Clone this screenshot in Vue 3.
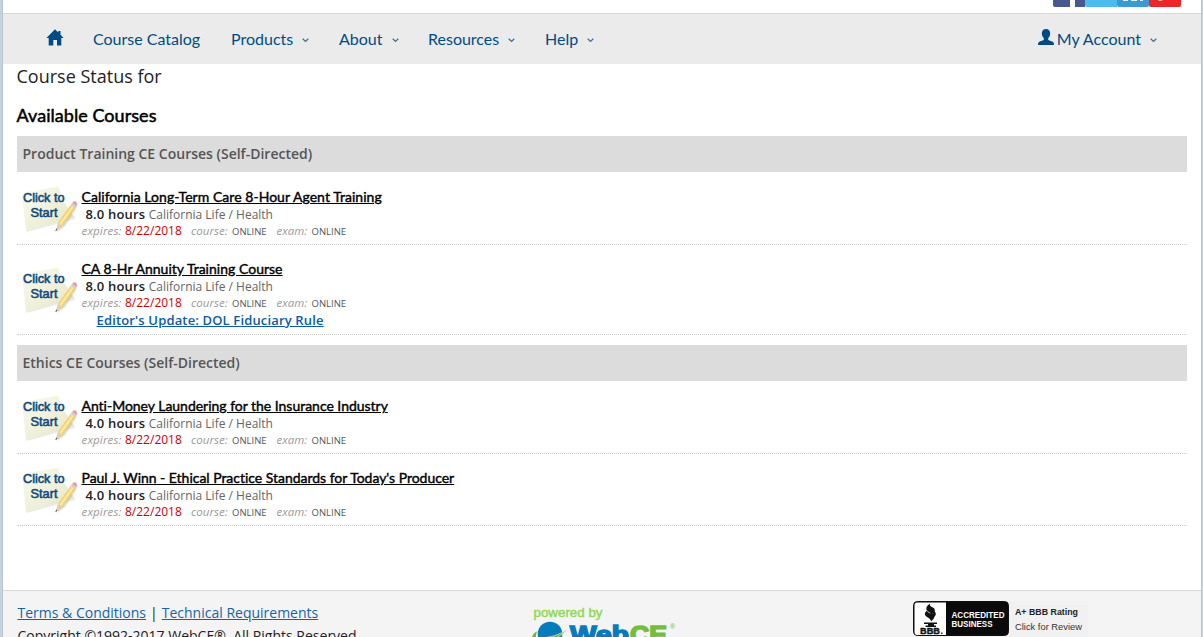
<script setup>
const menu = [
  { label: 'Products', cls: 'products' },
  { label: 'About', cls: 'about' },
  { label: 'Resources', cls: 'resources' },
  { label: 'Help', cls: 'help' },
]
const groups = [
  {
    title: 'Product Training CE Courses (Self-Directed)',
    courses: [
      { name: 'California Long-Term Care 8-Hour Agent Training', cls: 't1', hours: '8.0 hours' },
      { name: 'CA 8-Hr Annuity Training Course', cls: 't2', hours: '8.0 hours', update: "Editor's Update: DOL Fiduciary Rule" },
    ],
  },
  {
    title: 'Ethics CE Courses (Self-Directed)',
    courses: [
      { name: 'Anti-Money Laundering for the Insurance Industry', cls: 't3', hours: '4.0 hours' },
      { name: "Paul J. Winn - Ethical Practice Standards for Today's Producer", cls: 't4', hours: '4.0 hours' },
    ],
  },
]
</script>

<template>
  <div class="page">
    <div class="top">
      <div class="social">
        <svg width="128" height="7" viewBox="0 0 128 7">
          <path d="M0 0H32V7H2Q0 7 0 5Z" fill="#48588f" />
          <path d="M17 0H22V7H17Z" fill="#fff" />
          <path d="M32 0H64V7H34Q32 7 32 5Z" fill="#4dbcec" />
          <path d="M64 0H96V5Q96 7 94 7H66Q64 7 64 5Z" fill="#3a9ad4" />
          <path d="M96 0H128V5Q128 7 126 7H98Q96 7 96 5Z" fill="#ee2526" />
          <path d="M70 0h5v1h-5zM78 0h6v1h-6zM87 0h3v1h-3z" fill="#e2f2fb" />
          <path d="M105 0h5l-2 1h-2z" fill="#fff" opacity=".7" />
        </svg>
      </div>
    </div>
    <nav class="nav">
      <svg class="home" width="18" height="17" viewBox="0 0 18 17">
        <path d="M9 .3L12.300 3.500V2H14.500V5.700L17.600 9H15.300V16.500H11V11H7.300V16.500H2.700V9H.4Z" fill="#004b85" />
      </svg>
      <span class="link catalog"><span>Course Catalog</span></span>
      <span v-for="m in menu" :key="m.label" class="link" :class="m.cls">
        <span>{{ m.label }}</span>
        <svg class="chev" width="7" height="5" viewBox="0 0 7 5"><path d="M.7 .8L3.500 3.500L6.300 .8" fill="none" stroke="#3f6a98" stroke-width="1.200" /></svg>
      </span>
      <span class="link account">
        <svg class="user" width="16" height="16" viewBox="0 0 16 16">
          <path d="M8 0C10.700 0 12.200 1.800 12.200 4.500C12.200 6.500 11.200 8.200 10.200 9.300V10.800C11 11.800 14.500 12 15.500 13.500Q16 14.300 16 16H0Q0 14.300 .5 13.500C1.500 12 5 11.800 5.800 10.800V9.300C4.800 8.200 3.800 6.500 3.800 4.500C3.800 1.800 5.300 0 8 0Z" fill="#004b85" />
        </svg>
        <span>My Account</span>
        <svg class="chev" width="7" height="5" viewBox="0 0 7 5"><path d="M.7 .8L3.500 3.500L6.300 .8" fill="none" stroke="#3f6a98" stroke-width="1.200" /></svg>
      </span>
    </nav>
    <main class="content">
      <div class="status">Course Status for</div>
      <h2 class="available">Available Courses</h2>
      <section v-for="g in groups" :key="g.title" class="group">
        <h3 class="bar"><span>{{ g.title }}</span></h3>
        <article v-for="c in g.courses" :key="c.name" class="course" :class="{ tall: c.update }">
          <svg class="note" width="56" height="48" viewBox="0 0 56 48">
            <defs>
              <linearGradient id="paper" x1="0" y1="0" x2="1" y2="1">
                <stop offset="0" stop-color="#fafaee" />
                <stop offset=".6" stop-color="#eeefd9" />
                <stop offset="1" stop-color="#dde0b9" />
              </linearGradient>
            </defs>
            <path d="M1 8L36 1.500L43 18L53.500 33L4.500 46Z" fill="#999" opacity=".2" />
            <path d="M0 7L36 .5L42 16L52.500 31L4 45Z" fill="url(#paper)" />
            <path d="M35 46L39 36L53 17L55 21L43 40Z" fill="#888" opacity=".3" />
            <path d="M36 37L48.500 19L53.500 22L40.500 40Z" fill="#f1d071" />
            <path d="M37.300 37.500L50 20L51.700 21L39 39Z" fill="#fdec9c" />
            <path d="M48.500 19L50 17L54.800 20L53.500 22Z" fill="#cfcfd6" />
            <path d="M50 17Q51.500 14.500 54 15.500Q55.500 17 54.800 20Z" fill="#ec9a9f" />
            <path d="M36 37L40.500 40L33.500 45Z" fill="#e5cda5" />
            <path d="M34.300 42.500L35.600 43.700L33.300 45.200Z" fill="#555" />
            <g fill="#0b4a7c" stroke="#0b4a7c" stroke-width=".55" font-family="Liberation Sans, sans-serif" font-size="12.500">
              <text x="1" y="16" textLength="41.500" lengthAdjust="spacingAndGlyphs">Click to</text>
              <text x="8.500" y="30.500" textLength="27" lengthAdjust="spacingAndGlyphs">Start</text>
            </g>
          </svg>
          <div class="info">
            <div class="name"><a :class="c.cls">{{ c.name }}</a></div>
            <div class="hours"><b>{{ c.hours }}</b><span>California Life / Health</span></div>
            <div class="meta">
              <i class="exp">expires:</i><span class="date">8/22/2018</span>
              <i class="crs">course:</i><span class="mode">ONLINE</span>
              <i class="exm">exam:</i><span class="mode">ONLINE</span>
            </div>
            <a v-if="c.update" class="update">{{ c.update }}</a>
          </div>
        </article>
      </section>
    </main>
    <footer class="footer">
      <div class="legal">
        <div><a class="terms">Terms &amp; Conditions</a><span class="sep">|</span><a class="tech">Technical Requirements</a></div>
        <div class="copy">Copyright ©1992-2017 WebCE®. All Rights Reserved</div>
      </div>
      <svg class="webce" width="150" height="32" viewBox="0 0 150 32">
        <text x="1.500" y="12" fill="#92d950" stroke="#92d950" stroke-width=".45" font-family="Liberation Sans, sans-serif" font-size="13.500" textLength="69" lengthAdjust="spacingAndGlyphs">powered by</text>
        <circle cx="18" cy="29" r="12.300" fill="#087bbd" />
        <path d="M0 32Q1 28 5.500 26Q3.500 29 4 32Z" fill="#70b83b" />
        <path d="M5 33Q25 33 36 23.500Q30 31 20 35Z" fill="#70b83b" stroke="#f4f4f4" stroke-width=".6" />
        <g font-family="Liberation Sans, sans-serif" font-weight="bold" font-size="24" stroke-width="1.600">
          <text x="38" y="37.500" fill="#087bbd" stroke="#087bbd" textLength="59" lengthAdjust="spacingAndGlyphs">Web</text>
          <text x="98" y="37.500" fill="#75bd3f" stroke="#75bd3f" textLength="37" lengthAdjust="spacingAndGlyphs">CE</text>
        </g>
        <text x="138" y="24" fill="#75bd3f" font-family="Liberation Sans, sans-serif" font-size="7">®</text>
      </svg>
      <svg class="bbb" width="175" height="36" viewBox="0 0 175 36">
        <rect x="96" y="0" width="79" height="36" fill="#f1f1f1" />
        <rect x=".5" y=".5" width="95" height="34" rx="4" fill="#0a0a0a" stroke="#111" />
        <path d="M4 1.500H33V34H4Q1.500 34 1.500 31V4Q1.500 1.500 4 1.500Z" fill="#fff" />
        <path d="M17 2.500Q16 5 20 6.500Q24 9 19.500 13Q17 12 14.500 10Q11 6.500 17 2.500ZM14 9.500Q14.500 12 19 12.500Q24.500 15 18 20.500Q18 18 14 16Q9.500 13 14 9.500ZM21.500 10Q25 14 19.500 17Q19 13 21.500 10Z" fill="#111" />
        <path d="M11 21.500H24V23H21V24.500H23V26H12.500V24.500H15V23H11Z" fill="#111" />
        <g font-family="Liberation Sans, sans-serif" font-weight="bold">
          <text x="7" y="33" font-size="9" fill="#111" stroke="#111" stroke-width=".4" textLength="20" lengthAdjust="spacingAndGlyphs">BBB</text>
          <rect x="28" y="31.500" width="1.500" height="1.500" fill="#333" />
          <text x="38.500" y="16.500" font-size="8.500" fill="#fff" textLength="53" lengthAdjust="spacingAndGlyphs">ACCREDITED</text>
          <text x="38.500" y="26" font-size="8.500" fill="#fff" textLength="41" lengthAdjust="spacingAndGlyphs">BUSINESS</text>
          <text x="102" y="13.500" font-size="8.500" fill="#222" textLength="63" lengthAdjust="spacingAndGlyphs">A+ BBB Rating</text>
        </g>
        <text x="102" y="28.500" font-family="Liberation Sans, sans-serif" font-size="8.500" fill="#333" textLength="67" lengthAdjust="spacingAndGlyphs">Click for Review</text>
      </svg>
    </footer>
  </div>
</template>

<style>
body { overflow: hidden; }
</style>

<style scoped>
.page { box-sizing: border-box; width: 1203px; height: 637px; overflow: hidden; display: flex; flex-direction: column; background: #fff; border-left: 2px solid #c3d3e2; border-right: 1px solid #c3d3e2; box-shadow: inset 1px 0 #bcc4cc, inset -1px 0 #bcc4cc; padding: 0 1px; font-family: "Open Sans", sans-serif; color: #222; }
.top { height: 13px; flex: none; display: flex; justify-content: flex-end; padding-right: 20px; }
.social svg { display: block; }
.nav { height: 51px; flex: none; box-sizing: border-box; border-top: 1px solid #d8d8d8; background: #ebebeb; display: flex; align-items: center; font: 16px "Lato", sans-serif; color: #004b85; padding-left: 43px; padding-bottom: 2px; }
.home { margin-right: 29px; margin-top: -1px; }
.link { display: flex; align-items: center; white-space: nowrap; height: 24px; }
.catalog { width: 138px; }
.products { width: 108px; }
.about { width: 89px; }
.resources { width: 117px; }
.chev { margin-left: 9px; margin-top: 4px; }
.account { margin-left: auto; margin-right: 44px; }
.user { margin-right: 3px; margin-top: -3px; }
.content { height: 526px; flex: none; padding: 0 14px 0 14px; }
.status { height: 36px; line-height: 25px; font-size: 18px; margin-left: -.5px; }
.available { margin: 0 0 0 -.5px; height: 36px; font: 400 18px/31px "Lato", sans-serif; letter-spacing: .05px; -webkit-text-stroke: .5px #000; color: #000; }
.group { padding-bottom: 10px; }
.bar { margin: 0; height: 36px; line-height: 36px; padding-left: 5.5px; background: #dcdcdc; color: #555; font-size: 14px; font-weight: 600; }
.course { box-sizing: border-box; height: 72px; display: flex; border-bottom: 1px dotted #ccc; padding-top: 15px; }
.bar + .course { height: 73px; padding-top: 16px; }
.course.tall { height: 90px; }
.note { flex: none; margin: -2px 4px 0 4.5px; }
.tall .note { margin-top: 7px; }
.info { white-space: nowrap; }
.name { height: 18px; line-height: 18px; font-family: "Lato", sans-serif; font-size: 14px; color: #000; -webkit-text-stroke: .4px #000; }
.name a { text-decoration: underline; }
.t1 { letter-spacing: .04px; }
.t2 { letter-spacing: .02px; }
.t3 { letter-spacing: -.02px; }
.t4 { letter-spacing: -.025px; }
.hours { height: 17px; line-height: 17px; font-size: 12px; color: #666; padding-left: 4px; }
.hours b { color: #222; font-size: 13px; font-weight: 600; margin-right: 3.5px; letter-spacing: .17px; }
.meta { height: 16px; line-height: 16px; display: flex; align-items: baseline; font-size: 12px; }
.meta i { color: #999; font-size: 11.5px; }
.exp { width: 43.500px; letter-spacing: .15px; }
.crs { width: 41px; letter-spacing: .05px; }
.exm { width: 35px; }
.date { color: #c00; width: 66px; }
.mode { color: #555; font-size: 9.5px; width: 44.500px; }
.update { display: block; padding-left: 15px; line-height: 18px; font-size: 13px; font-weight: 600; color: #0a5ca3; text-decoration: underline; letter-spacing: .15px; }
.footer { flex: 1; box-sizing: border-box; border-top: 1px solid #d8d8d8; background: #f4f4f4; display: flex; align-items: flex-start; padding-left: 14.500px; overflow: hidden; }
.legal { width: 514.500px; padding-top: 10px; font-size: 14px; line-height: 23px; white-space: nowrap; }
.legal a { color: #1464a5; text-decoration: underline; }
.sep { margin: 0 4px; }
.webce { margin-top: 14px; flex: none; }
.bbb { margin: 10px 0 0 231px; flex: none; }
</style>
